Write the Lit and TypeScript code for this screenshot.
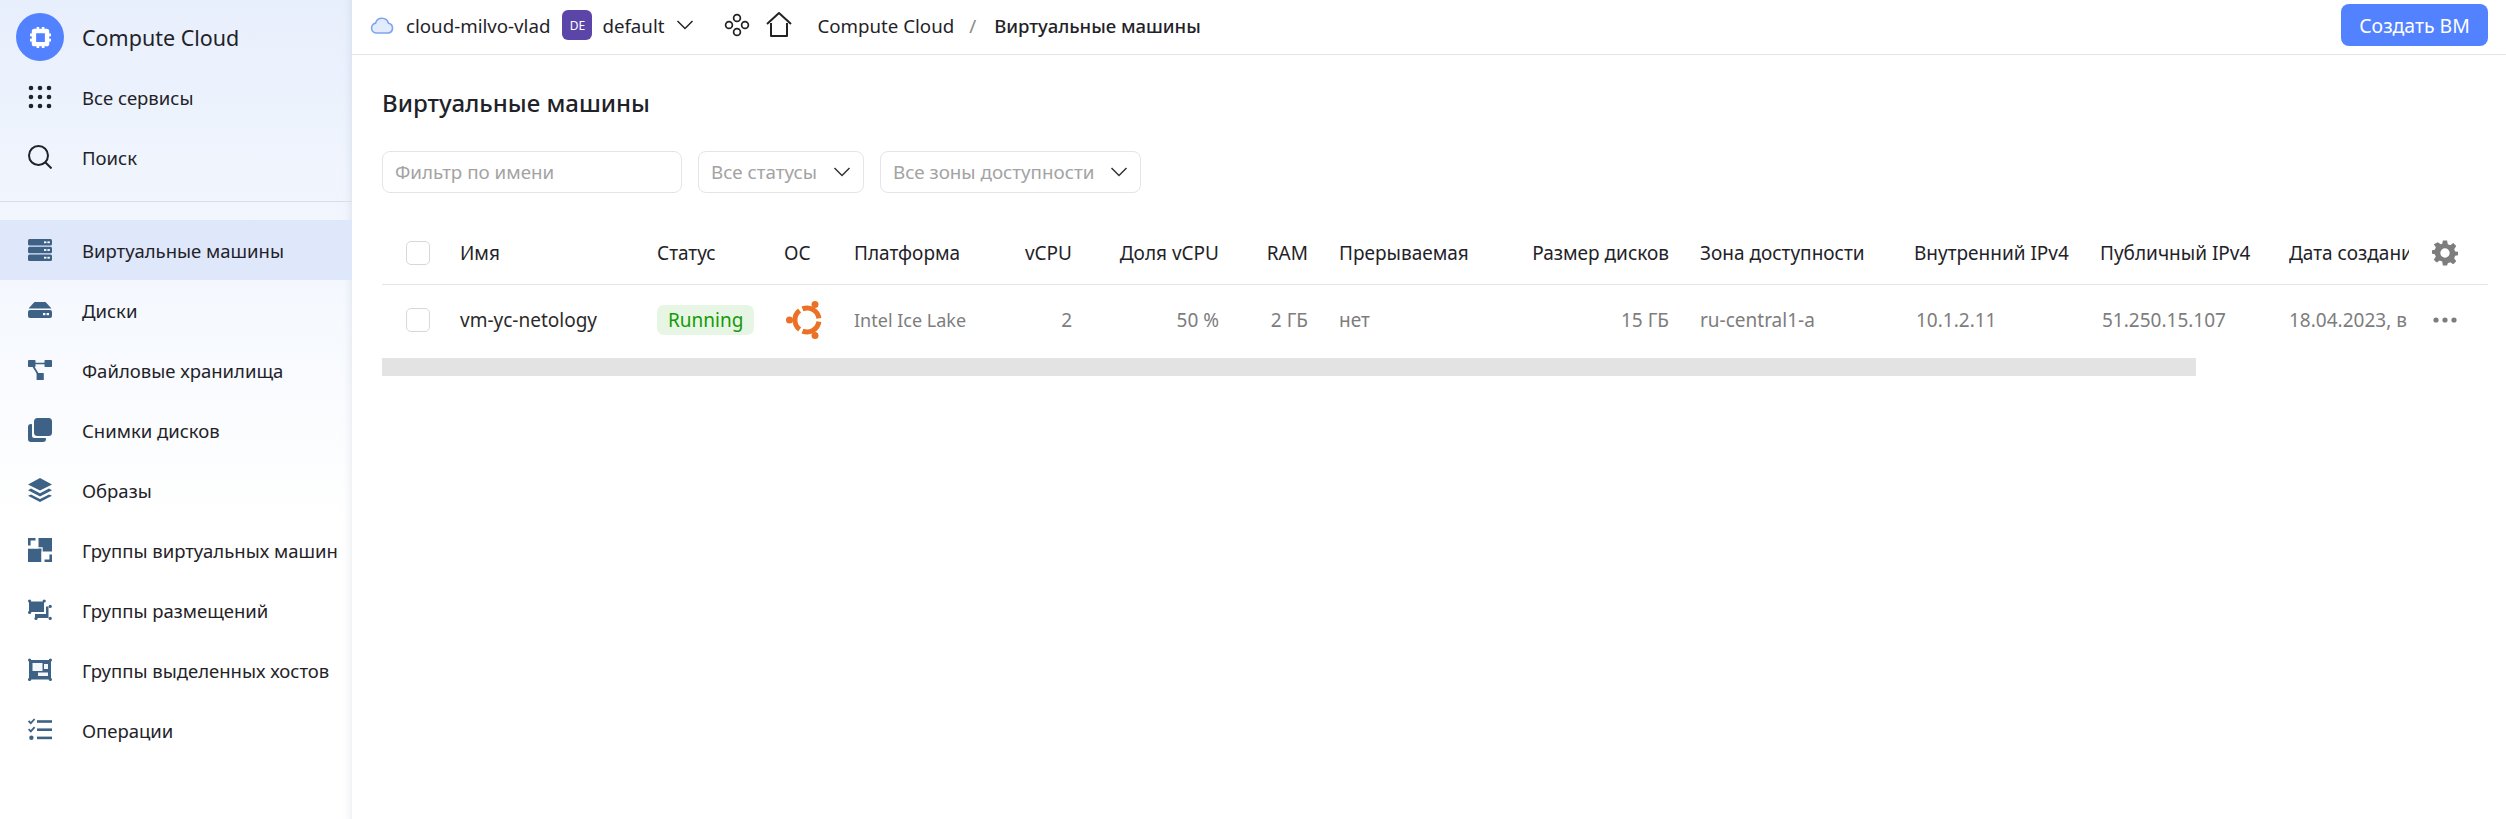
import { LitElement, html, css, svg } from 'lit';
import { customElement } from 'lit/decorators.js';

const BLUE = '#3e6285';

const icons: Record<string, unknown> = {
  grid: svg`<g fill="#1f2329"><circle cx="3" cy="3" r="2.3"/><circle cx="12" cy="3" r="2.3"/><circle cx="21" cy="3" r="2.3"/><circle cx="3" cy="12" r="2.3"/><circle cx="12" cy="12" r="2.3"/><circle cx="21" cy="12" r="2.3"/><circle cx="3" cy="21" r="2.3"/><circle cx="12" cy="21" r="2.3"/><circle cx="21" cy="21" r="2.3"/></g>`,
  search: svg`<g fill="none" stroke="#1f2329" stroke-width="2"><circle cx="10.5" cy="10.5" r="9.5"/><path d="M17.5 17.5l6 6"/></g>`,
  servers: svg`<g fill="${BLUE}"><rect x="0" y="1" width="24" height="6.6" rx="1.5"/><rect x="0" y="8.7" width="24" height="6.6" rx="1.5"/><rect x="0" y="16.4" width="24" height="6.6" rx="1.5"/></g><g fill="#fff"><rect x="16" y="3.4" width="2.4" height="1.8"/><rect x="19.4" y="3.4" width="2.4" height="1.8"/><rect x="16" y="11.1" width="2.4" height="1.8"/><rect x="19.4" y="11.1" width="2.4" height="1.8"/><rect x="16" y="18.8" width="2.4" height="1.8"/><rect x="19.4" y="18.8" width="2.4" height="1.8"/></g>`,
  disk: svg`<path fill="${BLUE}" d="M6.5 4h11l6 6.6H.5zM2 12h20a2 2 0 0 1 2 2v4a2 2 0 0 1-2 2H2a2 2 0 0 1-2-2v-4a2 2 0 0 1 2-2z"/><g fill="#fff"><rect x="15" y="15" width="2.4" height="2.2"/><rect x="18.6" y="15" width="2.4" height="2.2"/></g>`,
  storage: svg`<g fill="${BLUE}"><rect x="0" y="2" width="7.5" height="7" rx=".8"/><rect x="16.5" y="2" width="7.5" height="7" rx=".8"/><rect x="8.6" y="15" width="7.2" height="7" rx=".6"/></g><path fill="none" stroke="${BLUE}" stroke-width="1.7" d="M6 5.500h11M5 8l5 8"/>`,
  snapshot: svg`<g fill="${BLUE}"><rect x="6" y="0" width="18" height="18" rx="3.5"/><path d="M4 6.3v11.4A2.3 2.3 0 0 0 6.300 20h11.400a4 4 0 0 1 .3 1 3 3 0 0 1-3 3H3a3 3 0 0 1-3-3V9a3 3 0 0 1 3-3z"/></g>`,
  layers: svg`<g fill="${BLUE}"><path d="M12 0l12 6.400-12 6.200L0 6.400z"/><path d="M3 10.600l9 4.600 9-4.600 3 1.600-12 6.200-12-6.200z"/><path d="M3 16.400l9 4.600 9-4.600 3 1.400-12 6.200-12-6.200z"/></g>`,
  vmgroups: svg`<g fill="${BLUE}"><rect x="10.500" y="0" width="13.500" height="13.500"/><rect x="0" y="10.500" width="13.500" height="13.500"/><path d="M0 0h7.500v2.600H2.600v5H0zM24 16.500V24h-7.500v-2.600h4.900v-4.900z"/></g><path fill="none" stroke="#fff" stroke-width="1.200" d="M0 9.900h14.100V24"/>`,
  placement: svg`<g fill="${BLUE}"><rect x="1" y="3.500" width="15" height="10.500"/><path d="M7 16h11V8.500h2.500V20H7z"/><circle cx="1.600" cy="3" r="1.600"/><circle cx="16.200" cy="3" r="1.600"/><circle cx="1.600" cy="14.400" r="1.600"/><circle cx="8" cy="20.400" r="1.600"/><circle cx="22.200" cy="8.400" r="1.600"/><circle cx="22.200" cy="20.400" r="1.600"/></g>`,
  hosts: svg`<g fill="${BLUE}"><rect x="1" y="2" width="22" height="19.500"/><circle cx="1.600" cy="2" r="1.600"/><circle cx="22.400" cy="2" r="1.600"/><circle cx="1.600" cy="21.400" r="1.600"/><circle cx="22.400" cy="21.400" r="1.600"/></g><g fill="#f4f6fb"><rect x="4.500" y="5" width="10" height="8"/><rect x="16" y="6" width="4" height="5"/><rect x="10" y="14.500" width="10" height="3.500"/></g>`,
  operations: svg`<g fill="${BLUE}"><rect x="9" y="2.200" width="15" height="2.600"/><rect x="9" y="10.400" width="15" height="2.600"/><rect x="9" y="18.600" width="15" height="2.600"/><circle cx="3.400" cy="19.800" r="2.200"/></g><path fill="none" stroke="${BLUE}" stroke-width="1.800" d="M.6 3l2.200 2.200L6.600 1M.6 11.200l2.200 2.200 3.800-4.200"/>`,
};

const navTop = [
  { icon: 'grid', label: 'Все сервисы' },
  { icon: 'search', label: 'Поиск' },
];

const navItems = [
  { icon: 'servers', label: 'Виртуальные машины', active: true },
  { icon: 'disk', label: 'Диски' },
  { icon: 'storage', label: 'Файловые хранилища' },
  { icon: 'snapshot', label: 'Снимки дисков' },
  { icon: 'layers', label: 'Образы' },
  { icon: 'vmgroups', label: 'Группы виртуальных машин' },
  { icon: 'placement', label: 'Группы размещений' },
  { icon: 'hosts', label: 'Группы выделенных хостов' },
  { icon: 'operations', label: 'Операции' },
];

const chevron = html`<svg class="chev" viewBox="0 0 18 10"><path d="M1.500 1l7.500 7.500L16.500 1" fill="none" stroke="currentColor" stroke-width="1.500"/></svg>`;

@customElement('app-root')
export class AppRoot extends LitElement {
  static styles = css`
    :host {
      display: flex;
      width: 2506px;
      height: 819px;
      overflow: hidden;
      background: #fff;
      color: #1f2329;
      font-family: 'Noto Sans', 'Liberation Sans', sans-serif;
      font-size: 19px;
    }
    .side {
      width: 352px;
      flex: none;
      background: linear-gradient(180deg, #e8effc 0%, #f3f7fe 250px, #fff 520px);
      box-shadow: inset -9px 0 8px -8px rgba(30, 50, 90, 0.1);
      font-size: 18.500px;
    }
    .logo-row { height: 48px; padding: 13px 0 6px 16px; display: flex; align-items: center; font-size: 21.500px; }
    .logo { width: 48px; height: 48px; border-radius: 50%; background: #5282ff; margin-right: 18px; display: flex; align-items: center; justify-content: center; }
    .logo svg { width: 21px; height: 21px; }
    .nav { height: 60px; display: flex; align-items: center; padding-left: 28px; white-space: nowrap; }
    .nav svg { width: 24px; height: 24px; flex: none; margin-right: 30px; }
    .nav.active { background: #dfe7fa; }
    .divider { height: 1px; background: #d9dee8; margin: 14px 0 18px; }

    .main { flex: 1; min-width: 0; }
    .top { height: 50px; padding: 0 18px 4px; border-bottom: 1px solid #e5e5e5; display: flex; align-items: center; white-space: nowrap; font-size: 18.700px; }
    .top .cloud { width: 24px; height: 24px; margin-right: 12px; }
    .badge { width: 30px; height: 30px; border-radius: 6px; background: #5b45a8; color: #fff; font-size: 12px; display: flex; align-items: center; justify-content: center; margin: 0 10px 0 12px; }
    .chev { width: 18px; height: 10px; }
    .top .chev { margin-left: 12px; }
    .top .apps { width: 26px; height: 26px; margin-left: 30px; }
    .top .home { width: 28px; height: 28px; margin-left: 15px; }
    .crumb { margin-left: 24px; }
    .sep { color: #888; margin: 0 18px 0 15px; }
    .current { font-weight: 500; font-size: 18.500px; }
    .create { margin-left: auto; width: 147px; height: 42px; border: none; border-radius: 8px; background: #5282ff; color: #fff; font: inherit; font-size: 19.400px; padding: 0; }

    .content { padding: 0 18px 0 30px; }
    h1 { margin: 0; font-size: 24px; font-weight: 500; line-height: 32px; padding-top: 32px; color: #1f2329; }
    .filters { display: flex; margin-top: 32px; color: #a3a3a3; font-size: 18.800px; }
    .field { height: 42px; box-sizing: border-box; border: 1px solid #e5e5e5; border-radius: 8px; display: flex; align-items: center; padding: 0 12px; white-space: nowrap; }
    .field.name { width: 300px; margin-right: 16px; }
    .field.status { width: 166px; margin-right: 16px; justify-content: space-between; }
    .field.zone { width: 261px; justify-content: space-between; }
    .field .chev { color: #333; }

    .head, .row {
      display: grid;
      grid-template-columns: 78px 197px 127px 70px 140px 78px 147px 89px 172px 189px 245px 186px 189px 120px 79px;
      align-items: center;
      white-space: nowrap;
      box-sizing: border-box;
    }
    .head { margin-top: 29px; height: 63px; border-bottom: 1px solid #e5e5e5; }
    .row { height: 73px; padding-bottom: 3px; color: #7d7d7d; }
    .row .name { color: #2b2b2b; }
    .check { width: 24px; height: 24px; box-sizing: border-box; border: 1px solid #d8d8d8; border-radius: 5px; margin-left: 24px; }
    .r { text-align: right; }
    .pl { padding-left: 31px; }
    .ip { padding-left: 2px; }
    .clip { overflow: hidden; }
    .plat { font-size: 18px; }
    .tag { display: inline-block; background: #e7f6e4; color: #149a05; border-radius: 7px; height: 30px; line-height: 30px; padding: 0 11px; }
    .os { width: 36px; height: 38px; display: block; margin-left: 2px; }
    .act { width: 24px; height: 24px; display: block; margin-left: 24px; }
    .gear { width: 26px; height: 26px; display: block; margin-left: 23px; }
    .scroll { height: 18px; width: 1814px; background: #e3e3e3; }
  `;

  render() {
    return html`
      <aside class="side">
        <div class="logo-row">
          <div class="logo">
            <svg viewBox="0 0 24 24">
              <path fill="#fff" fill-rule="evenodd" d="M5 2h2.500V0h3v2h3V0h3v2H19a3 3 0 0 1 3 3v2.500h2v3h-2v3h2v3h-2V19a3 3 0 0 1-3 3h-2.500v2h-3v-2h-3v2h-3v-2H5a3 3 0 0 1-3-3v-2.500H0v-3h2v-3H0v-3h2V5a3 3 0 0 1 3-3zM7 7v10h10V7z"/>
            </svg>
          </div>
          Compute Cloud
        </div>
        ${navTop.map(n => this.renderNav(n))}
        <div class="divider"></div>
        ${navItems.map(n => this.renderNav(n))}
      </aside>

      <div class="main">
        <div class="top">
          <svg class="cloud" viewBox="0 0 24 24"><path fill="#e3ecff" stroke="#7ea4ee" stroke-width="1.600" d="M6.500 20A5 5 0 0 1 5.600 10.100 6.700 6.700 0 0 1 18.500 10.300 4.900 4.900 0 0 1 18 20z"/></svg>
          <span>cloud-milvo-vlad</span>
          <span class="badge">DE</span>
          <span>default</span>
          ${chevron}
          <svg class="apps" viewBox="0 0 26 26"><g fill="none" stroke="#222" stroke-width="1.700"><circle cx="13" cy="6" r="3.400"/><circle cx="13" cy="20" r="3.400"/><circle cx="5" cy="13" r="3.400"/><circle cx="21" cy="13" r="3.400"/></g></svg>
          <svg class="home" viewBox="0 0 28 28"><path fill="none" stroke="#222" stroke-width="2" stroke-linejoin="round" d="M2 13L14 2l12 11M6 12v13h16V12"/></svg>
          <span class="crumb">Compute Cloud</span>
          <span class="sep">/</span>
          <span class="current">Виртуальные машины</span>
          <button class="create">Создать ВМ</button>
        </div>

        <div class="content">
          <h1>Виртуальные машины</h1>
          <div class="filters">
            <div class="field name">Фильтр по имени</div>
            <div class="field status">Все статусы ${chevron}</div>
            <div class="field zone">Все зоны доступности ${chevron}</div>
          </div>

          <div class="head">
            <div class="check"></div>
            <div>Имя</div>
            <div>Статус</div>
            <div>ОС</div>
            <div>Платформа</div>
            <div class="r">vCPU</div>
            <div class="r">Доля vCPU</div>
            <div class="r">RAM</div>
            <div class="pl">Прерываемая</div>
            <div class="r">Размер дисков</div>
            <div class="pl">Зона доступности</div>
            <div>Внутренний IPv4</div>
            <div>Публичный IPv4</div>
            <div class="clip">Дата создания</div>
            <svg class="gear" viewBox="-.5 -.5 25 25">
              <path fill="#7d7d7d" fill-rule="evenodd" d="M10 0h4l.7 3.500 2.300 1 3-2 2.800 2.800-2 3 1 2.300 3.700.4v3l-3.700.7-1 2.300 2 3-2.800 2.800-3-2-2.300 1L14 24h-4l-.7-3.800-2.300-1-3 2-2.800-2.800 2-3-1-2.300-3.700-.6v-3l3.700-.7 1-2.300-2-3L5 1.700l3 2 1.300-.5zM12 7.500a4.500 4.500 0 1 0 0 9 4.500 4.500 0 0 0 0-9z"/>
            </svg>
          </div>

          <div class="row">
            <div class="check"></div>
            <div class="name">vm-yc-netology</div>
            <div><span class="tag">Running</span></div>
            <svg class="os" viewBox="0 0 36 38">
              <g fill="none" stroke="#ea7125" stroke-width="5">
                <path d="M32.900 17.300A12 12 0 0 0 16.500 7.900"/>
                <path d="M13.600 9.500A12 12 0 0 0 13.600 28.500"/>
                <path d="M16.500 30.100A12 12 0 0 0 32.900 20.700"/>
              </g>
              <g fill="#ea7125"><circle cx="3.500" cy="19" r="3.500"/><circle cx="29" cy="3.500" r="3.500"/><circle cx="29" cy="34.500" r="3.500"/></g>
            </svg>
            <div class="plat">Intel Ice Lake</div>
            <div class="r">2</div>
            <div class="r">50 %</div>
            <div class="r">2 ГБ</div>
            <div class="pl">нет</div>
            <div class="r">15 ГБ</div>
            <div class="pl">ru-central1-a</div>
            <div class="ip">10.1.2.11</div>
            <div class="ip">51.250.15.107</div>
            <div class="clip">18.04.2023, в</div>
            <svg class="act" viewBox="0 0 24 24"><g fill="#7d7d7d"><circle cx="3" cy="12" r="2.600"/><circle cx="12" cy="12" r="2.600"/><circle cx="21" cy="12" r="2.600"/></g></svg>
          </div>
          <div class="scroll"></div>
        </div>
      </div>
    `;
  }

  renderNav(n: { icon: string; label: string; active?: boolean }) {
    return html`<div class="nav ${n.active ? 'active' : ''}">
      <svg viewBox="0 0 24 24">${icons[n.icon]}</svg>${n.label}
    </div>`;
  }
}
